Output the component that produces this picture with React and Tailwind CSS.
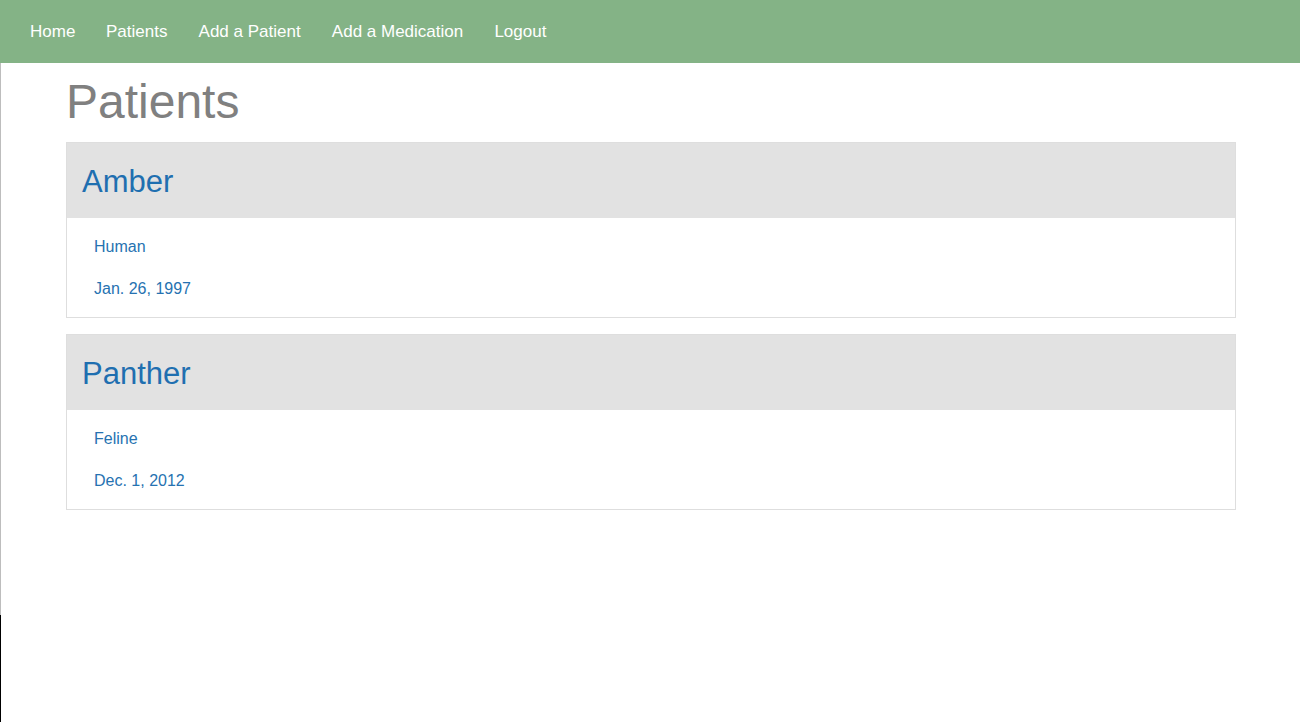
import React from 'react';

const navItems = ['Home', 'Patients', 'Add a Patient', 'Add a Medication', 'Logout'];

const patients = [
  { name: 'Amber', species: 'Human', birthday: 'Jan. 26, 1997' },
  { name: 'Panther', species: 'Feline', birthday: 'Dec. 1, 2012' },
];

const PatientCard = ({ name, species, birthday }) => (
  <div className="border border-[#dedede] mb-4">
    <div className="bg-[#e2e2e2] h-[75px] flex items-center px-[15px]">
      <h2 className="text-[31px] text-[#1f6fb0] leading-none pt-[2px]">{name}</h2>
    </div>
    <div className="flex flex-col gap-6 pl-[27px] pt-[20px] pb-[19px] text-[#2672b1] text-base leading-[18px]">
      <span>{species}</span>
      <span>{birthday}</span>
    </div>
  </div>
);

const App = () => {
  return (
    <div
      className="min-h-[722px] bg-white"
      style={{ fontFamily: '"Liberation Sans", Arial, sans-serif' }}
    >
      <nav className="bg-[#84b386] h-[63px] flex items-center pl-[15px]">
        {navItems.map((item) => (
          <a key={item} href="#" className="px-[15.6px] first:px-[15px] text-white text-[17px]">
            {item}
          </a>
        ))}
      </nav>
      <div className="flex min-h-[659px]">
        <div className="w-[1px] flex flex-col">
          <div className="h-[552px] bg-[#bdbdbd]" />
          <div className="flex-1 bg-black" />
        </div>
        <div className="pl-[65px] pt-[13px] w-[1235px]">
          <h1 className="text-[48px] leading-[1.1] text-[#808080] mb-[13px]">
            Patients
          </h1>
          {patients.map((p) => (
            <PatientCard key={p.name} {...p} />
          ))}
        </div>
      </div>
    </div>
  );
};

export default App;
